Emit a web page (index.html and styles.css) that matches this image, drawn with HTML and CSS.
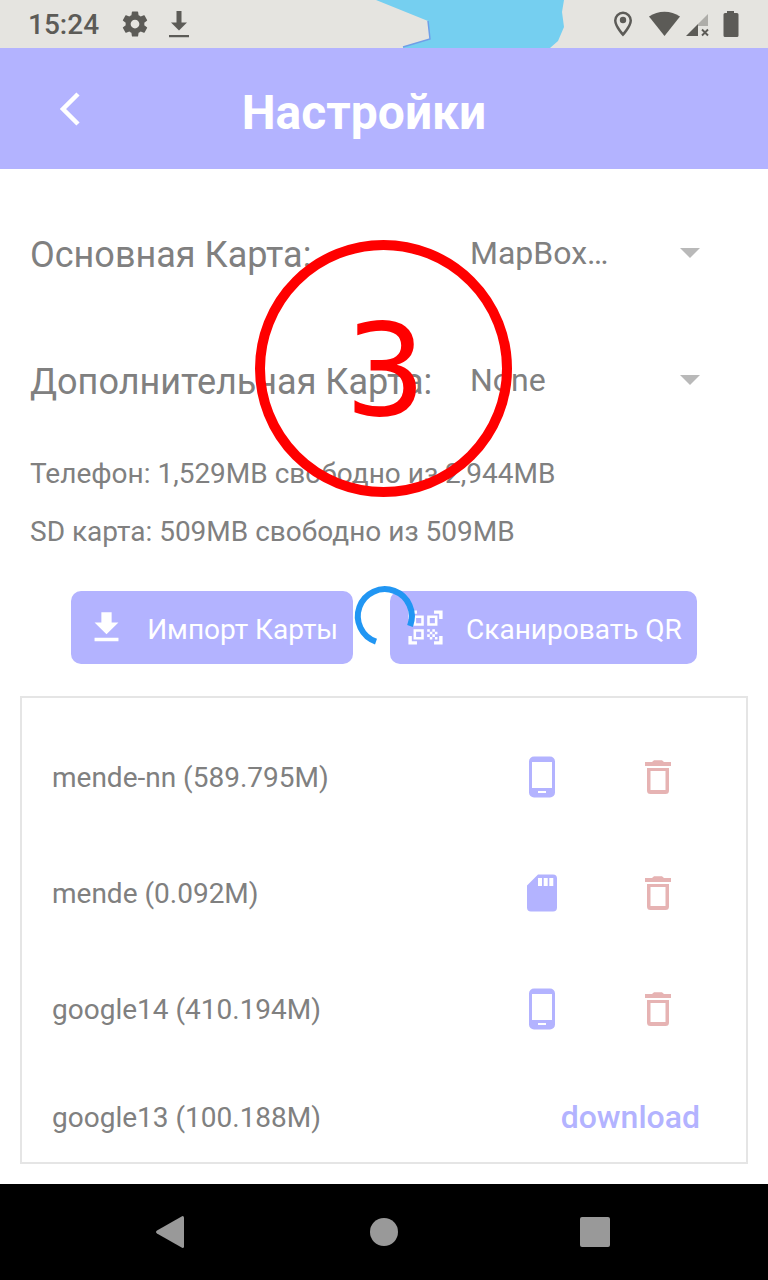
FILE: index.html
```html
<!DOCTYPE html>
<html lang="ru">
<head>
<meta charset="utf-8">
<meta name="viewport" content="width=device-width, initial-scale=1">
<title>Настройки</title>
<link rel="stylesheet" href="styles.css">
</head>
<body>
<svg class="defs" width="0" height="0" aria-hidden="true">
  <symbol id="i-phone" viewBox="0 0 42 42"><path fill-rule="evenodd" d="M13 .5h16a5 5 0 0 1 5 5v31a5 5 0 0 1-5 5H13a5 5 0 0 1-5-5v-31a5 5 0 0 1 5-5zM11 6v26h20V6zM17 35v2h8v-2z"/></symbol>
  <symbol id="i-sd" viewBox="0 0 42 42"><path fill-rule="evenodd" d="M17 2.500h15a4 4 0 0 1 4 4v29a4 4 0 0 1-4 4H10a4 4 0 0 1-4-4V13.500zM17 6v8h4V6zm5.700 0v8h4V6zm5.600 0v8h4V6z"/></symbol>
  <symbol id="i-trash" viewBox="0 0 42 42"><path fill-rule="evenodd" d="M10 12h22v22.500a3.500 3.500 0 0 1-3.500 3.500h-15a3.500 3.500 0 0 1-3.500-3.500zM13.500 15v19h15V15zM8 6h7l2-1.700h8L27 6h7v4H8z"/></symbol>
</svg>
<div class="screen">
  <div class="status">
    <svg class="map" viewBox="370 0 200 48" aria-hidden="true">
      <path fill="#75cff0" d="M376 0 428 21 430 39 403 47V48H550L558 41 564 27 562 12 564 0z"/>
      <path fill="none" stroke="#6f9fe8" stroke-width="1.500" d="M428 21 430 39 403 47"/>
    </svg>
    <time class="clock">15:24</time>
    <svg class="gear" viewBox="0 0 24 24" aria-hidden="true"><path d="M19.430 12.980c.04-.32.07-.64.07-.98s-.03-.66-.07-.98l2.110-1.650c.19-.15.24-.42.12-.64l-2-3.460c-.12-.22-.39-.3-.61-.22l-2.490 1c-.52-.4-1.080-.73-1.690-.98l-.38-2.650C14.460 2.180 14.250 2 14 2h-4c-.25 0-.46.18-.49.42l-.38 2.650c-.61.25-1.170.59-1.690.98l-2.490-1c-.23-.09-.49 0-.61.22l-2 3.460c-.13.22-.07.49.12.64l2.110 1.650c-.04.32-.07.65-.07.98s.03.66.07.98l-2.110 1.650c-.19.15-.24.42-.12.64l2 3.460c.12.22.39.3.61.22l2.490-1c.52.4 1.080.73 1.690.98l.38 2.650c.03.24.24.42.49.42h4c.25 0 .46-.18.49-.42l.38-2.650c.61-.25 1.170-.59 1.690-.98l2.490 1c.23.09.49 0 .61-.22l2-3.460c.12-.22.07-.49-.12-.64l-2.110-1.650zM12 15.500c-1.930 0-3.500-1.570-3.500-3.500s1.570-3.500 3.500-3.500 3.500 1.570 3.500 3.500-1.570 3.500-3.500 3.500z"/></svg>
    <svg class="dl" viewBox="0 0 20 28" aria-hidden="true"><path d="M7.500 1h5v11.500H18L10 20.500 2 12.500h5.500zM0 25h20v2.300H0z"/></svg>
    <svg class="tray" viewBox="0 0 126 28" aria-hidden="true">
      <path fill-rule="evenodd" d="M10 1.500a9 9 0 0 0-9 9C1 17 10 26.500 10 26.500S19 17 19 10.500a9 9 0 0 0-9-9zm0 2.500a6.500 6.500 0 0 1 6.500 6.500c0 4-4.500 9.500-6.500 12-2-2.500-6.500-8-6.500-12A6.500 6.500 0 0 1 10 4z"/>
      <circle cx="10" cy="10" r="3.200"/>
      <path d="M36 6.500C45 0 58 0 67 6.500L51.500 26z"/>
      <path opacity=".4" d="M95 4v12H85V14z"/>
      <path d="M85 14v12H73z"/>
      <path fill="none" stroke="#5c5b57" stroke-width="1.900" d="m89 19.500 6 6m0-6-6 6"/>
      <path d="M114 1h7v2h3a1.500 1.500 0 0 1 1.500 1.500v21a1.500 1.500 0 0 1-1.500 1.500h-12a1.500 1.500 0 0 1-1.500-1.500v-21A1.500 1.500 0 0 1 112 3h2z"/>
    </svg>
  </div>

  <header class="bar">
    <button class="back" type="button" aria-label="Назад"><svg viewBox="0 0 24 36" aria-hidden="true"><path d="M20 3 5 18 20 33" fill="none" stroke="#fff" stroke-width="4.500"/></svg></button>
    <h1 class="title">Настройки</h1>
  </header>

  <main class="content">
    <div class="field">
      <label class="label" for="main-map">Основная Карта:</label>
      <div class="picker">
        <select class="select" id="main-map"><option>MapBox…</option></select>
        <svg class="caret" viewBox="0 0 20 10" aria-hidden="true"><path d="M0 0h20L10 10z"/></svg>
      </div>
    </div>
    <div class="field">
      <label class="label" for="extra-map">Дополнительная Карта:</label>
      <div class="picker">
        <select class="select" id="extra-map"><option>None</option></select>
        <svg class="caret" viewBox="0 0 20 10" aria-hidden="true"><path d="M0 0h20L10 10z"/></svg>
      </div>
    </div>
    <p class="storage">Телефон: 1,529MB свободно из 2,944MB</p>
    <p class="storage">SD карта: 509MB свободно из 509MB</p>

    <div class="actions">
      <button class="action" type="button"><svg class="action-icon" viewBox="0 0 24 24" aria-hidden="true"><path d="M19 9h-4V3H9v6H5l7 7 7-7zM5 18v2h14v-2H5z"/></svg><span class="action-text">Импорт Карты</span></button>
      <button class="action" type="button"><svg class="action-icon" viewBox="0 0 24 24" aria-hidden="true"><path d="M9.500 6.500v3h-3v-3h3M11 5H5v6h6V5zm-1.500 9.500v3h-3v-3h3M11 13H5v6h6v-6zm6.500-6.500v3h-3v-3h3M19 5h-6v6h6V5zm-6 8h1.500v1.500H13V13zm1.500 1.500H16V16h-1.500v-1.500zM16 13h1.500v1.500H16V13zm-3 3h1.500v1.500H13V16zm1.500 1.500H16V19h-1.500v-1.500zM16 16h1.500v1.500H16V16zm1.500-1.500H19V16h-1.500v-1.500zm0 3H19V19h-1.500v-1.500zM22 7h-2V4h-3V2h5v5zm0 15v-5h-2v3h-3v2h5zM2 22h5v-2H4v-3H2v5zM2 2v5h2V4h3V2H2z"/></svg><span class="action-text">Сканировать QR</span></button>
      <svg class="spinner" viewBox="0 0 60 60" role="img" aria-label="Загрузка"><path d="M56 40A27 27 0 1 0 22 55.700" fill="none" stroke="#2196f3" stroke-width="6"/></svg>
    </div>

    <ul class="maps">
      <li class="map-row"><span class="name">mende-nn (589.795M)</span>
        <button class="tool" type="button" aria-label="Телефон"><svg><use href="#i-phone"/></svg></button>
        <button class="tool danger" type="button" aria-label="Удалить"><svg><use href="#i-trash"/></svg></button></li>
      <li class="map-row"><span class="name">mende (0.092M)</span>
        <button class="tool" type="button" aria-label="SD карта"><svg><use href="#i-sd"/></svg></button>
        <button class="tool danger" type="button" aria-label="Удалить"><svg><use href="#i-trash"/></svg></button></li>
      <li class="map-row"><span class="name">google14 (410.194M)</span>
        <button class="tool" type="button" aria-label="Телефон"><svg><use href="#i-phone"/></svg></button>
        <button class="tool danger" type="button" aria-label="Удалить"><svg><use href="#i-trash"/></svg></button></li>
      <li class="map-row short"><span class="name">google13 (100.188M)</span>
        <button class="download" type="button">download</button></li>
    </ul>
    <div class="step">3</div>
  </main>

  <nav class="nav">
    <button class="key" type="button" aria-label="Назад"><svg viewBox="0 0 32 32"><path d="M25.500 0Q27 0 27 1.500v29q0 1.500-1.500 1.500L0 17.500Q-2 16 0 14.500z"/></svg></button>
    <button class="key" type="button" aria-label="Домой"><svg viewBox="0 0 32 32"><circle cx="16" cy="16" r="14"/></svg></button>
    <button class="key" type="button" aria-label="Обзор"><svg viewBox="0 0 32 32"><rect x="1" y="1" width="30" height="30" rx="2"/></svg></button>
  </nav>
</div>
</body>
</html>
```
FILE: styles.css
```css
* { box-sizing: border-box; }
body {
  margin: 0;
  font-family: Roboto, "Liberation Sans", sans-serif;
  font-size: 28px;
  color: #808080;
  background: #fff;
}
h1, p, ul { margin: 0; padding: 0; }
button, select { font: inherit; color: inherit; border: 0; background: none; padding: 0; margin: 0; }
svg { display: block; overflow: visible; }
.defs { position: absolute; }
.screen { min-height: 100vh; display: flex; flex-direction: column; }

.status {
  position: relative;
  height: 48px;
  display: flex;
  align-items: center;
  padding: 0 29px 0 28px;
  background: #e5e4e0;
  color: #5c5b57;
  fill: #5c5b57;
}
.map { position: absolute; left: 370px; top: 0; width: 200px; height: 48px; overflow: hidden; }
.clock { font-weight: 500; line-height: 48px; padding-top: 2px; }
.gear { width: 30px; height: 30px; margin-left: 21px; }
.dl { width: 20px; height: 28px; margin-left: 19px; }
.tray { width: 126px; height: 28px; margin-left: auto; }

.bar {
  height: 121px;
  display: flex;
  align-items: center;
  padding: 0 58px;
  background: #b3b3ff;
  color: #fff;
}
.back { width: 32px; height: 48px; display: grid; place-items: center start; }
.back svg { width: 24px; height: 36px; }
.title { flex: 1; padding: 8px 72px 0 0; text-align: center; font-size: 48px; line-height: 56px; font-weight: 700; }

.content {
  position: relative;
  flex: 1;
  display: flex;
  flex-direction: column;
  padding: 22px 20px 20px;
}
.field {
  height: 127px;
  display: grid;
  grid-template-columns: 440px 1fr;
  align-items: center;
  padding: 0 48px 0 10px;
}
.label { font-size: 36px; line-height: 44px; white-space: nowrap; }
.picker { display: grid; align-items: center; padding-bottom: 3px; }
.select { grid-area: 1 / 1; width: 100%; height: 48px; appearance: none; font-size: 32px; }
.caret { grid-area: 1 / 1; justify-self: end; width: 20px; height: 10px; fill: #b9b9b9; pointer-events: none; }
.storage { padding: 0 10px; line-height: 58px; }

.actions { position: relative; display: flex; justify-content: center; gap: 37px; margin-top: 30px; }
.action {
  height: 73px;
  display: flex;
  align-items: center;
  gap: 20px;
  padding: 0 15px;
  border-radius: 10px;
  background: #b3b3ff;
  color: #fff;
}
.action-icon { width: 41px; height: 41px; fill: #fff; }
.action-text { padding-top: 4px; }
.spinner { position: absolute; left: 50%; top: -5px; width: 60px; height: 60px; margin-left: -30px; }

.maps {
  flex: 1;
  margin-top: 32px;
  padding: 21px 30px 0;
  border: 2px solid #e5e5e5;
  list-style: none;
}
.map-row { height: 116px; display: flex; align-items: center; }
.map-row.short { height: 95px; padding-top: 5px; }
.name { flex: 1; }
.tool { width: 116px; height: 84px; display: grid; place-items: center; fill: #b3b3ff; }
.tool svg { width: 42px; height: 42px; }
.danger { fill: #e6b3b3; }
.download { padding-right: 16px; font-size: 32px; font-weight: 500; color: #b3b3ff; }

.step {
  position: absolute;
  left: 50%;
  top: 71px;
  width: 257px;
  height: 257px;
  margin-left: -129px;
  padding: 2px 0 0 4px;
  border: 10px solid #f00;
  border-radius: 50%;
  color: #f00;
  font: 128px/237px "DejaVu Sans", sans-serif;
  text-align: center;
  pointer-events: none;
}

.nav { height: 96px; display: flex; align-items: center; justify-content: center; background: #000; }
.key { width: 211px; height: 96px; display: grid; place-items: center; fill: #999; }
.key svg { width: 32px; height: 32px; }
```
